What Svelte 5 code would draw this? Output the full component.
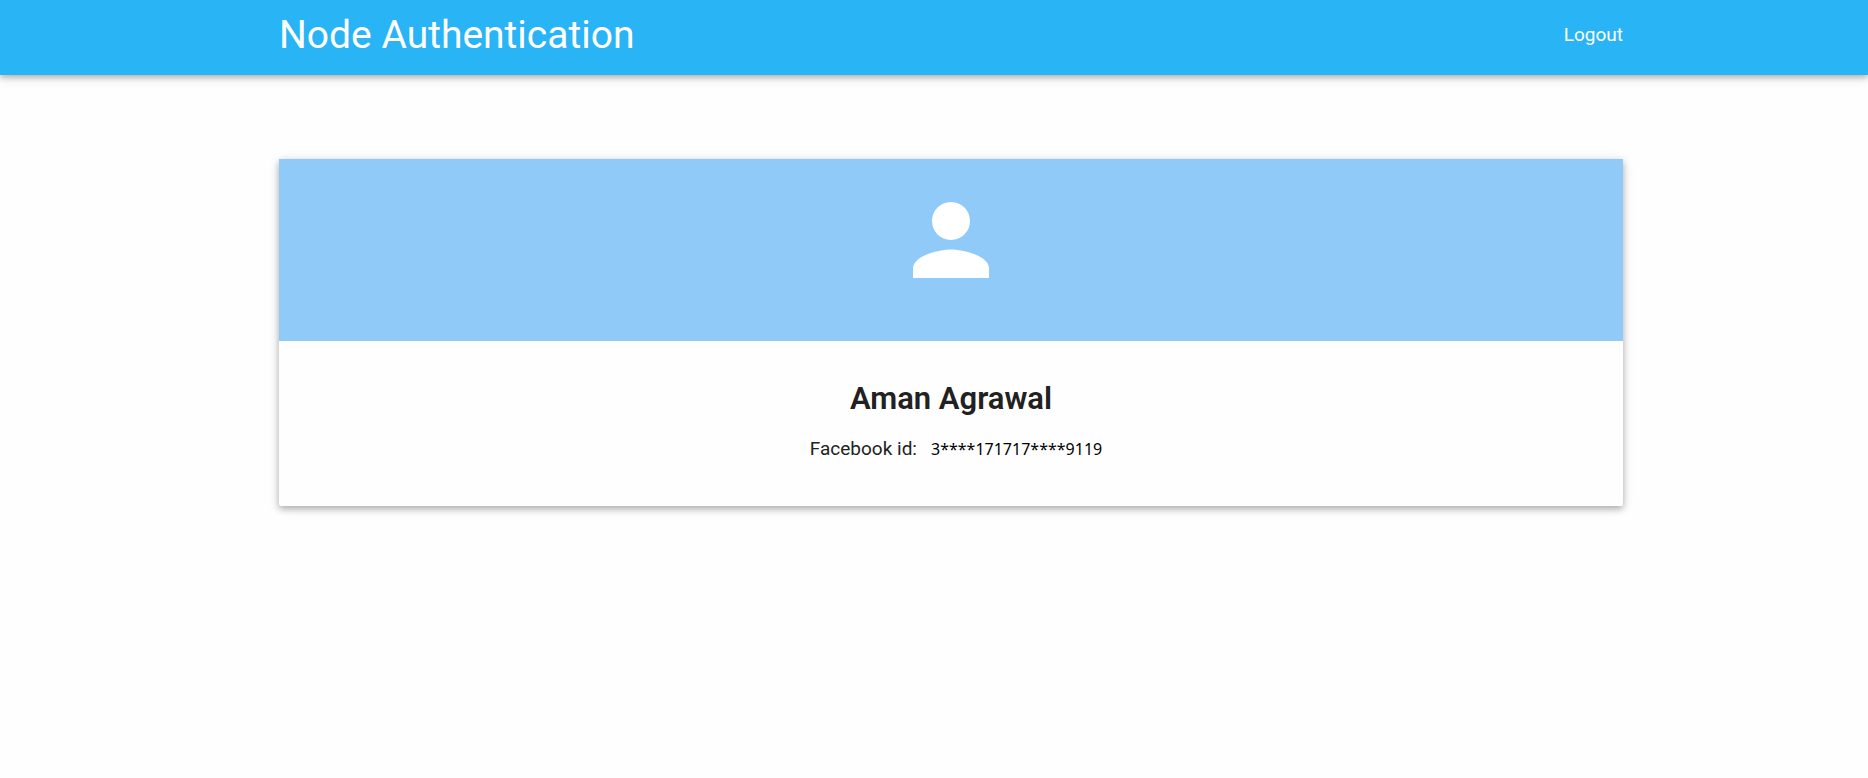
<script>
  const user = { name: 'Aman Agrawal', id: '3****171717****9119' };
</script>

<nav>
  <div class="container bar">
    <a class="brand" href="#home">Node Authentication</a>
    <a class="logout" href="#logout">Logout</a>
  </div>
</nav>

<main>
  <section class="container card">
    <div class="banner">
      <svg viewBox="0 0 24 24" aria-hidden="true">
        <path d="M12 12c2.21 0 4-1.79 4-4s-1.79-4-4-4-4 1.79-4 4 1.79 4 4 4zm0 2c-2.67 0-8 1.34-8 4v2h16v-2c0-2.66-5.33-4-8-4z" />
      </svg>
    </div>
    <div class="details">
      <h1>{user.name}</h1>
      <p>Facebook id: <span>{user.id}</span></p>
    </div>
  </section>
</main>

<style>
  :global(body) {
    background: #fefefe;
    font-family: Roboto, sans-serif;
    color: #212121;
  }
  nav,
  main {
    padding: 0 16px 0 50px;
  }
  nav {
    background: #29b4f6;
    box-shadow: 0 3px 5px rgba(0, 0, 0, 0.2), 0 2px 12px rgba(0, 0, 0, 0.14);
  }
  .container {
    max-width: 1344px;
    margin: 0 auto;
  }
  .bar {
    display: flex;
    justify-content: space-between;
    align-items: center;
    height: 69px;
    padding-bottom: 6px;
  }
  a {
    color: #fff;
    text-decoration: none;
  }
  .brand {
    font-size: 39px;
  }
  .logout {
    font-size: 19px;
  }
  main {
    padding-top: 84px;
    padding-bottom: 84px;
  }
  .card {
    border-radius: 2px;
    background: #fefefe;
    box-shadow: 0 3px 6px rgba(0, 0, 0, 0.24), 0 2px 12px rgba(0, 0, 0, 0.14);
  }
  .banner {
    display: flex;
    justify-content: center;
    padding: 24px 0 44px;
    background: #90caf9;
  }
  svg {
    width: 114px;
    height: 114px;
    fill: #fff;
  }
  .details {
    padding: 38px 24px 43px;
    text-align: center;
  }
  h1 {
    margin: 0 0 16px;
    font-size: 31px;
    font-weight: 600;
    line-height: 40px;
  }
  p {
    display: flex;
    justify-content: center;
    align-items: center;
    gap: 14px;
    margin: 0;
    padding-left: 10px;
    font-size: 19px;
    line-height: 28px;
  }
  span {
    color: #000;
    font-family: "Noto Sans", sans-serif;
    font-size: 16px;
  }
</style>
